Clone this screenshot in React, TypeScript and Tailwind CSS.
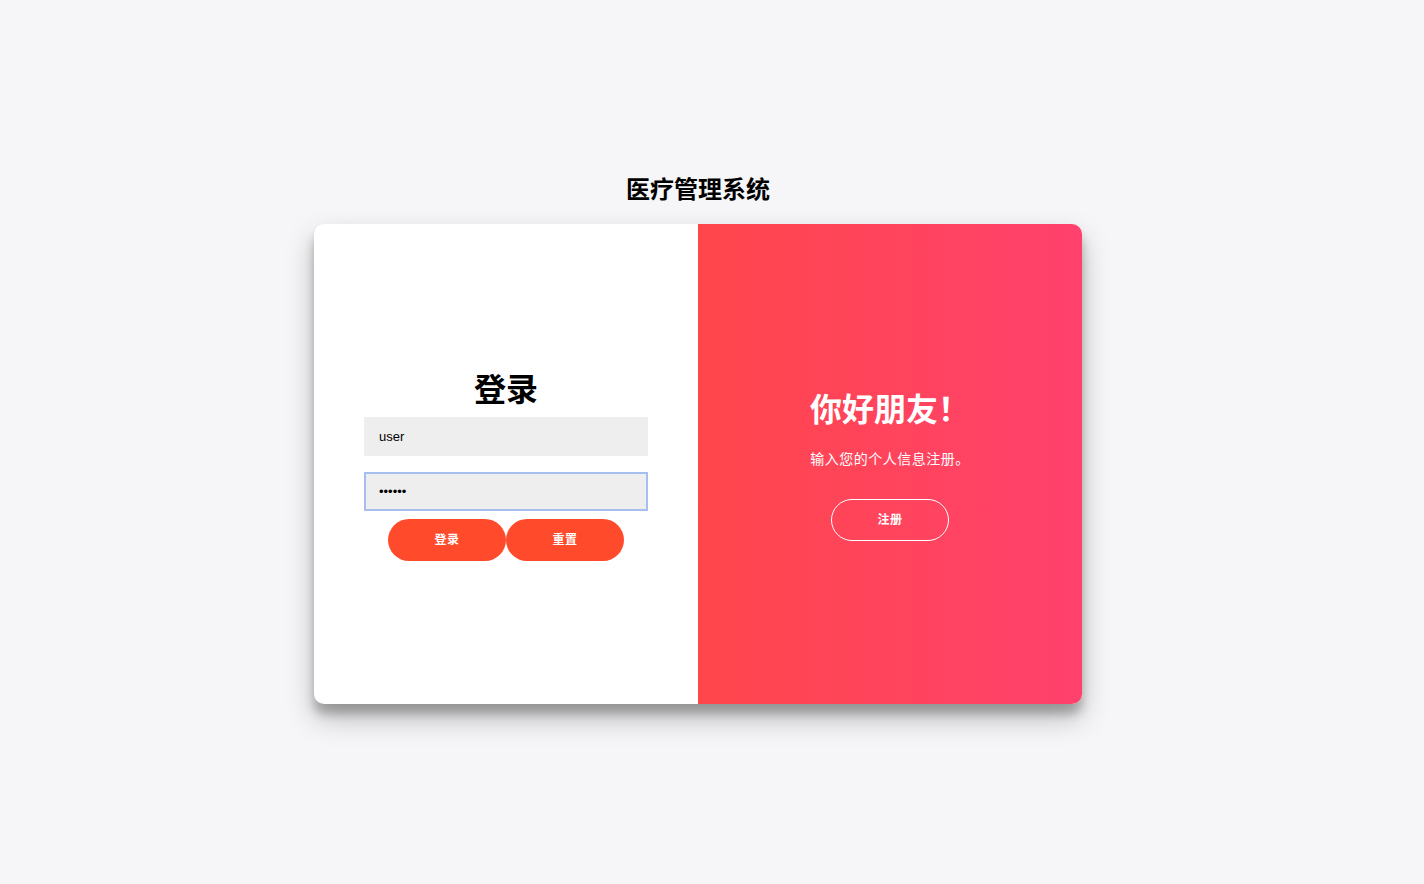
import { useState } from "react";

const fontStack = { fontFamily: '"Liberation Sans", "Noto Sans CJK SC", sans-serif' };

export default function App() {
	const [username, setUsername] = useState<string>("user");
	const [password, setPassword] = useState<string>("123456");

	return (
		<div className="min-h-screen bg-[#f6f5f7] flex flex-col items-center pt-[172px] pr-[28px]" style={fontStack}>
			<h2 className="text-2xl font-bold leading-[36px] text-black mb-4">医疗管理系统</h2>
			<div className="w-[768px] h-[480px] bg-white rounded-[10px] overflow-hidden flex shadow-[0_14px_28px_rgba(0,0,0,0.25),0_10px_10px_rgba(0,0,0,0.22)]">
				{/* login form */}
				<div className="w-1/2 h-full flex flex-col items-center justify-center px-[50px] pt-1">
					<h1 className="text-[32px] font-bold leading-[38px] text-black">登录</h1>
					<input
						className="w-full h-[39px] mt-2 bg-[#eee] px-[15px] text-[13px] text-black focus:outline-none"
						type="text"
						value={username}
						onChange={(e) => setUsername(e.target.value)}
					/>
					<input
						className="w-full h-[39px] mt-4 bg-[#eee] px-[15px] text-[13px] text-black outline-none ring-2 ring-inset ring-[#a6bff0]"
						type="password"
						value={password}
						onChange={(e) => setPassword(e.target.value)}
					/>
					<div className="flex mt-2">
						<button className="w-[118px] h-[42px] rounded-full bg-[#FF4B2B] text-white text-xs font-bold tracking-[0.5px]">
							登录
						</button>
						<button className="w-[118px] h-[42px] rounded-full bg-[#FF4B2B] text-white text-xs font-bold tracking-[0.5px]">
							重置
						</button>
					</div>
				</div>
				{/* overlay side */}
				<div className="w-1/2 h-full bg-gradient-to-r from-[#FF464B] to-[#FF416C] flex flex-col items-center justify-center px-10 pt-1 text-white">
					<h1 className="text-[32px] font-bold leading-[38px]">你好朋友！</h1>
					<p className="text-sm font-normal leading-5 tracking-[0.5px] mt-5 mb-[30px]">输入您的个人信息注册。</p>
					<button className="w-[118px] h-[42px] rounded-full border border-white bg-transparent text-white text-xs font-bold tracking-[0.5px]">
						注册
					</button>
				</div>
			</div>
		</div>
	);
}
